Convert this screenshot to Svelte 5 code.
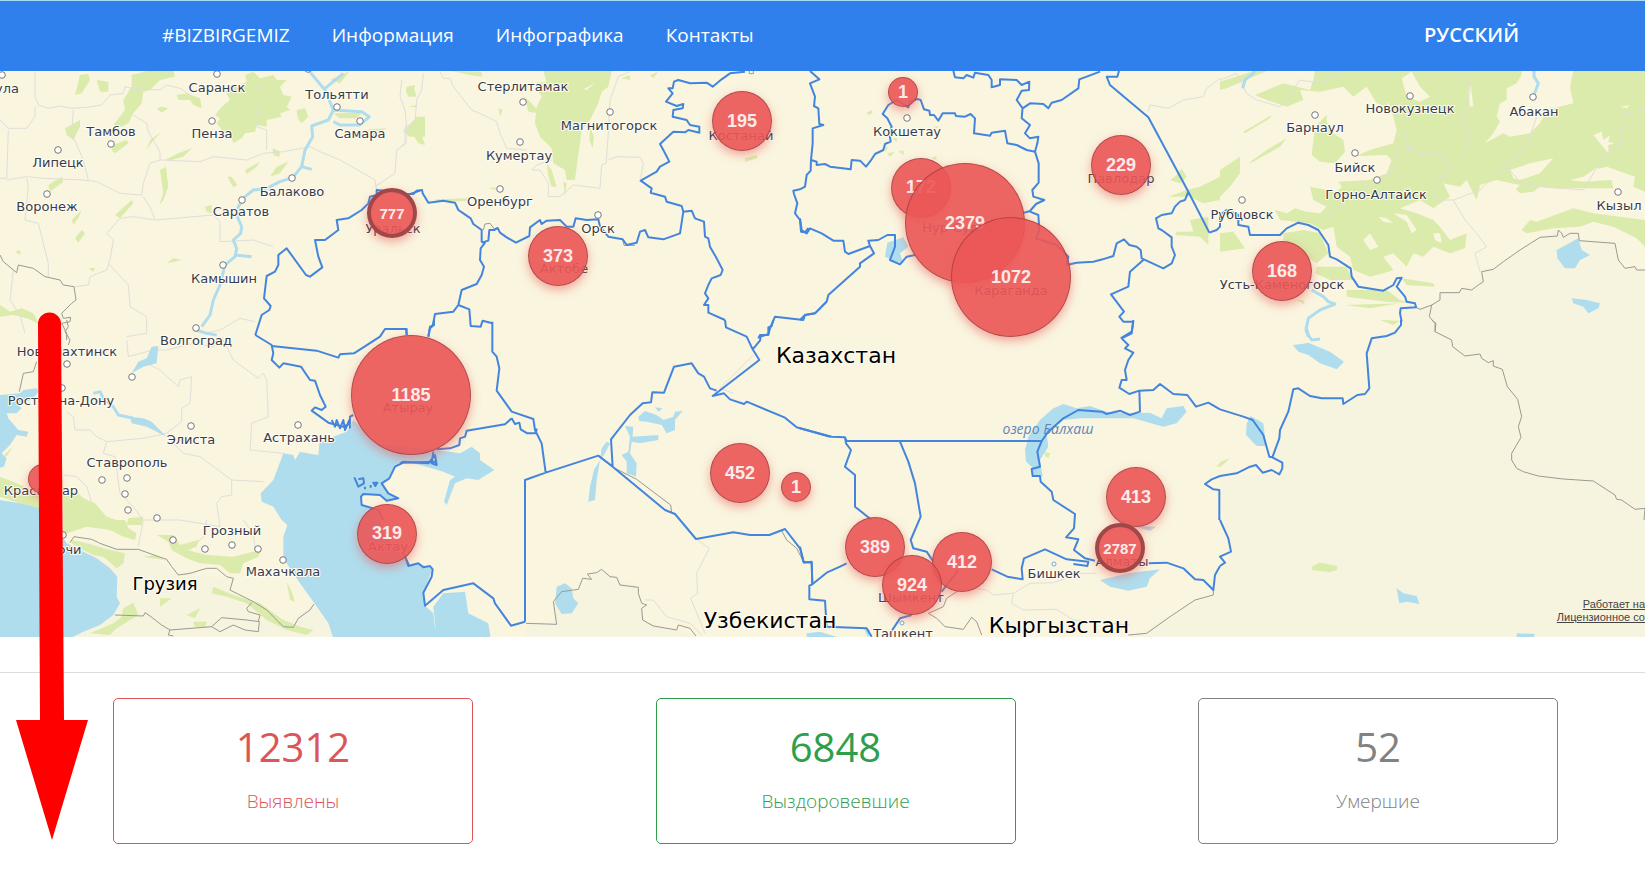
<script lang="ts">
  interface Tile {
    x: number;
    y: number;
    tint?: string;
    forest?: string;
    clearing?: string;
    water?: string;
    river?: string;
    region?: string;
    country?: string;
    outline?: string;
  }

  const MAP_WIDTH = 1645;
  const MAP_HEIGHT = 566;
  const MAP_TOP = 71;

  const links = ['#BIZBIRGEMIZ', 'Информация', 'Инфографика', 'Контакты'];

  const stats = [
    { value: 12312, label: 'Выявлены', kind: 'found' },
    { value: 6848, label: 'Выздоровевшие', kind: 'recovered' },
    { value: 52, label: 'Умершие', kind: 'died' }
  ];

  // Path units inside a tile are thirds of a map unit
  const tiles: Tile[] = [
    {
      x: 0,
      y: 0,
      forest:
        'M395 225 L440 213 L520 213 L525 230 L480 240 L450 270 L430 275 L425 310 L400 340 L385 370 L365 380 L340 375 L375 330 L370 300 L395 260Z M240 225 L265 222 L270 240 L245 280 L225 285Z M290 240 L325 245 L325 275 L300 275Z M530 285 L560 280 L600 295 L605 325 L580 315 L570 300 L535 300Z M470 325 L485 320 L505 325 L485 338Z M675 270 L700 262 L740 245 L735 225 L760 215 L780 235 L820 225 L830 240 L860 240 L840 260 L850 285 L875 290 L860 320 L870 330 L840 340 L845 350 L800 360 L800 380 L770 375 L765 395 L735 400 L725 415 L700 430 L690 400 L670 395 L650 370 L660 355 L645 345 L665 320 L690 300Z M890 330 L915 325 L925 350 L905 370 L893 355Z M1000 340 L1085 338 L1070 355 L1020 355Z M195 385 L240 360 L240 380 L220 420 L200 405Z M340 435 L380 420 L385 430 L345 460 L335 450Z M440 450 L450 420 L485 395 L460 420Z M495 480 L535 460 L575 445 L550 470 L515 480Z M480 510 L498 500 L505 560 L490 600 L478 615 L490 580Z M735 510 L780 485 L770 500 L740 522Z M682 530 L695 530 L712 555 L700 562Z M810 530 L830 500 L865 485 L840 520Z M818 445 L840 455 L838 472 L820 465Z M1080 400 L1110 388 L1160 385 L1120 410 L1090 418Z M1210 395 L1250 350 L1275 350 L1275 410 L1230 410Z M1218 270 L1240 260 L1250 290 L1225 290Z M145 555 L185 530 L190 545 L150 575Z M345 645 L395 600 L400 610 L360 655Z M215 660 L245 630 L235 655 L220 675Z M225 715 L245 690 L255 700 L235 728Z M500 790 L520 775 L545 780 L525 785Z M45 755 L62 750 L60 765Z M265 805 L285 803 L280 815Z M0 915 L30 935 L65 925 L100 940 L115 970 L80 955 L40 945 L0 950Z M615 620 L635 615 L635 640 L620 635Z M990 240 L1050 213 L1020 250Z',
      river:
        'M925 210 L975 270 L1000 330 L985 360 L935 378 L938 410 L915 450 L905 500 L878 533 L840 545 L800 565 L760 570 L735 590 L715 620 L712 650 L725 680 L722 700 L700 720 L710 745 L705 770 L675 795 L660 855 L640 900 L630 945 L605 980 M975 265 L1030 220 M1000 330 L1085 335 L1108 350 L1080 375 L1020 375 L1000 365 M705 765 L755 770 M905 500 L935 508',
      region:
        'M105 215 L105 290 L115 315 L145 325 L180 318 L215 325 L260 322 L305 315 L330 285 L370 280 L375 260 L395 265 L480 270 L500 255 L540 265 L570 285 M105 320 L105 350 L80 385 L25 385 L0 360 M25 390 L20 535 L0 535 M20 540 L80 530 L130 535 L250 540 L290 545 L360 580 L425 585 L430 550 L450 490 L480 480 L480 455 L465 430 L445 395 L440 370 L400 345 M220 330 L215 400 L250 480 L265 540 M80 535 L85 560 L75 660 L115 670 L125 710 L145 790 L145 830 M480 480 L600 485 L640 470 L740 480 L790 460 L850 455 L930 440 L960 455 L1020 480 L1125 540 L1130 570 M1125 560 L1185 520 L1190 450 L1218 430 L1220 380 L1215 330 L1200 290 L1205 240 M430 590 L450 620 L465 660 L400 650 L360 655 L320 700 L340 720 L330 780 L320 810 L270 830 L265 855 L225 860 M465 660 L640 645 L660 665 L660 725 L760 720 L820 740 M325 790 L385 855 L390 920 L440 950 L440 1000 L380 1010 M40 810 L30 900 L60 945 L75 1000 M775 250 L780 300 L770 380 L800 390 L800 450 M610 1000 L660 990 L720 955 L765 965',
      country:
        'M0 765 L10 785 L50 818 L55 795 L100 805 L135 830 L180 840 L190 855 L222 860 L228 900 L215 910 L185 940 L190 955 L212 952 L210 965 L185 970 L200 1000 L200 1020',
      outline:
        'M1260 572 L1222 585 L1180 575 L1130 570 L1130 585 L1110 590 L1105 610 L1085 630 L1045 655 L1010 660 L1015 690 L975 720 L945 720 L955 770 L967 802 L930 830 L918 825 L860 745 L835 765 L835 795 L825 815 L800 828 L792 895 L812 918 L808 930 L785 945 L766 1005'
    },
    {
      x: 400,
      y: 0,
      forest:
        'M430 213 L635 213 L625 260 L605 275 L595 310 L570 360 L545 390 L540 430 L530 500 L525 540 L500 540 L495 510 L460 490 L455 445 L420 410 L405 370 L410 320 L425 290 L400 250 L440 245Z M440 490 L455 510 L470 560 L455 560 L445 530Z M490 545 L500 550 L495 590Z M570 380 L582 410 L578 445 L568 420Z M20 260 L45 255 L40 285 L18 280Z M10 390 L75 365 L60 390 L75 435 L55 430 L40 405Z M105 598 L205 595 L200 603 L110 606Z M375 290 L405 320 L415 340 L385 335Z M295 325 L308 330 L300 350Z M665 235 L690 225 L690 240Z M265 565 L290 562 L285 570Z M1035 475 L1070 465 L1072 475 L1035 485Z M25 320 L50 315 L50 322Z M155 213 L245 215 L245 230 L210 225Z M750 225 L775 215 L760 235Z',
      clearing: 'M550 268 L585 250 L560 270Z',
      region:
        'M120 215 L130 235 L150 235 L160 260 L215 330 L250 345 L290 365 L300 400 L320 445 L380 450 M70 220 L65 270 L50 300 L45 370 L15 380 L15 430 L0 442 M690 215 L655 230 L630 300 L625 400 L618 490 L605 495 L600 565 L520 555 L480 590 L445 590 L445 550 L420 510 L395 510 L410 495 L455 480 M625 480 L650 470 L720 472 L730 490 L722 535',
      country: 'M250 690 L255 672 L270 670 L285 690 M668 718 L672 736 L705 736 M1048 213 L1048 221 L1060 221 L1060 213',
      outline:
        'M0 582 L40 582 L50 572 L66 570 L68 580 L85 608 L130 602 L165 608 L175 630 L190 640 L212 655 L220 672 L245 690 L245 725 L255 728 L242 745 L240 780 L252 800 L245 825 L230 852 L185 870 L175 915 L160 935 L105 942 L98 978 L90 985 L85 1010 M245 728 L265 722 L268 690 L282 690 L293 684 L300 698 L320 712 L348 728 L388 708 L390 682 L420 660 L425 672 L440 662 L480 660 L500 680 L520 680 L527 655 L560 660 L595 658 L600 680 L625 710 L668 718 L680 735 L710 728 L720 695 L735 690 L745 712 L790 718 L840 700 L850 635 L875 632 L885 655 L912 665 L915 710 L925 715 L930 740 L950 775 L968 810 L962 825 L935 835 L925 855 L915 880 L925 895 L912 915 L925 915 L925 938 L975 960 M1035 215 L990 220 L965 238 L938 260 L920 248 L870 250 L835 240 L822 245 L818 265 L805 265 L818 280 L798 305 L830 318 L850 312 L848 325 L820 330 L818 350 L860 360 L870 375 L898 380 L898 398 L865 390 L855 397 L820 395 L780 432 L790 450 L808 485 L780 500 L770 515 L738 533 L722 542 L755 565 L752 578 L795 590 L800 605 L845 618 L850 635 M175 915 L208 928 L212 978 L242 980 L248 962 L277 970 M1200 568 L1180 572 L1182 582 L1192 610 L1185 640 L1200 660 L1203 695 L1215 697 L1225 684 M1075 1015 L1080 1005 L1105 1005 L1110 985 L1125 950 L1210 960 L1215 945 L1245 940 L1280 905'
    },
    {
      x: 800,
      y: 0,
      forest:
        'M1125 530 L1145 505 L1160 530 L1140 550 L1110 540Z M1105 590 L1160 570 L1200 560 L1260 530 L1260 600 L1210 610 L1170 590 L1140 590Z M1170 660 L1225 650 L1225 735 L1200 710 L1125 705 L1130 695 L1180 695Z M200 338 L215 330 L218 340 L203 345Z M295 455 L310 450 L312 465Z M262 460 L285 455 L270 470Z M395 475 L410 468 L408 480Z M275 415 L292 415 L290 425Z M400 380 L415 378 L412 385Z M252 440 L264 440 L258 456Z',
      water: 'M262 728 L310 712 L325 740 L300 760 L310 790 L285 785 L255 770Z',
      region: 'M1045 335 L1050 315 L1105 325 L1150 300 L1210 290 L1220 265 L1260 235',
      outline:
        'M30 213 L58 238 L30 250 L45 290 L42 318 L55 325 L58 372 L70 375 L38 385 L38 430 L33 480 L32 512 L20 525 L15 560 L0 568 M33 480 L50 485 L50 495 L75 492 L90 500 L152 508 L155 480 L180 482 L198 500 L215 478 L225 462 L250 450 L255 432 L272 425 L268 400 L275 380 L262 355 L248 342 L265 315 L290 300 L325 322 L330 305 L352 297 L362 300 L372 328 L388 332 L390 345 L402 345 L415 362 L428 340 L465 340 L468 348 L495 350 L512 342 L525 355 L522 400 L570 407 L575 398 L615 392 L622 430 L650 435 L680 450 L705 455 L712 430 L715 410 L690 415 L675 400 L690 375 L665 355 L668 320 M460 213 L465 232 L490 235 L500 225 L520 233 L525 218 L565 225 L575 240 L575 262 L600 255 L600 238 L650 240 L665 255 L688 245 L687 270 L665 272 L650 300 L668 325 L690 310 L730 312 L745 325 L755 308 L785 300 L835 265 L838 238 L900 215 M957 213 L952 230 L920 230 L930 255 L1045 352 L1165 575 L1228 698 M705 455 L716 490 L716 548 L697 570 L700 590 L733 600 L708 612 L690 633 L672 638 M690 635 L715 645 L718 690 L708 715 L770 735 L805 770 L800 795 L830 788 L880 785 L908 778 L940 768 L950 730 L972 718 L988 735 L1010 740 L1022 750 L1025 775 L1090 805 L1115 790 L1125 765 L1115 740 L1115 712 L1085 690 L1075 685 L1068 655 L1085 645 L1115 640 L1125 620 L1140 605 L1155 600 L1165 575 M1030 780 L990 815 L985 860 L933 883 L972 935 L958 950 L970 965 L1000 965 L995 1000 L965 1015 M0 655 L5 690 L20 700 L30 685 L65 700 L100 722 L130 722 L135 755 L145 762 L210 738 L222 760 L180 790 L180 800 L85 885 L80 905 L45 940 L15 945 L0 960 M210 738 L205 722 L235 720 L262 705 L285 705 L285 740 L270 780 L300 793 L320 770 L345 765'
    },
    {
      x: 1220,
      y: 0,
      tint:
        'M590 925 L635 915 L660 880 L725 872 L790 830 L785 815 L820 800 L880 765 L960 710 L1015 690 L1075 700 L1080 722 L1185 730 L1195 785 L1220 805 L1275 810 L1275 1915 L-275 1915 L-80 1810 L-20 1785 L-15 1740 L35 1655 L0 1500 L0 1430 L180 1420 L187 1390 L155 1370 L205 1240 L225 1165 L370 1205 L430 1185 L450 1165 L440 1050 L455 1015 L500 1000 L545 970 L540 930Z',
      forest:
        'M490 213 L905 213 L905 225 L890 250 L860 265 L860 300 L840 310 L830 350 L840 365 L820 400 L795 430 L850 400 L870 410 L930 400 L960 370 L980 330 L1060 310 L1050 260 L1060 213 L1275 213 L1275 575 L1240 560 L1245 530 L1160 500 L1120 510 L1090 530 L1050 540 L1090 545 L1175 540 L1180 565 L1000 565 L960 560 L940 575 L900 580 L870 550 L830 540 L780 555 L770 600 L740 540 L720 560 L670 550 L690 590 L640 625 L600 600 L540 625 L590 640 L640 660 L660 680 L690 720 L740 700 L735 745 L690 760 L640 740 L610 770 L580 760 L560 800 L520 760 L490 770 L520 810 L490 820 L450 830 L400 810 L390 770 L350 740 L340 680 L310 690 L270 670 L180 660 L165 630 L200 640 L225 625 L260 635 L300 640 L320 620 L280 600 L270 560 L350 575 L365 560 L355 545 L450 540 L500 520 L515 480 L500 465 L410 468 L450 450 L520 430 L530 390 L520 350 L500 290 L440 240Z M285 213 L500 213 L520 260 L500 320 L470 310 L440 260 L400 290 L370 260 L300 275 L240 270 L250 300 L200 320 L140 300 L105 285 L190 250 L270 270 L280 240Z M285 380 L320 345 L320 365 L340 400 L370 420 L375 455 L345 490 L300 485 L275 465Z M0 245 L100 213 L140 213 L20 265 L0 270Z M70 395 L155 345 L150 355 L75 400Z M85 490 L140 450 L200 415 L180 440 L100 485Z M0 510 L60 470 L60 520 L30 560 L0 590Z M0 700 L40 695 L75 745 L0 755Z M380 870 L500 870 L540 900 L580 910 L500 905 L380 890Z M375 915 L540 910 L450 925Z M545 835 L640 850 L645 860 L560 855Z M480 960 L540 962 L520 975Z M190 700 L250 690 L300 700 L325 760 L290 790 L260 770 L190 720Z M290 800 L380 800 L400 840 L330 840 L285 820Z M905 690 L930 660 L950 665 L1060 625 L1120 640 L1200 650 L1275 660 L1275 740 L1250 715 L1180 680 L1120 665 L1080 680 L1000 685 L920 700Z M232 900 L250 900 L255 915Z',
      clearing:
        'M545 235 L575 215 L600 260 L630 290 L600 305 L560 290Z M1120 405 L1145 395 L1150 420 L1170 405 L1165 425 L1185 430 L1165 435 L1165 460 L1140 430Z M870 510 L930 490 L1000 475 L960 520 L900 540 L880 535Z M745 275 L752 255 L760 318 L750 320Z M1105 530 L1130 500 L1145 520 L1120 545Z M1200 320 L1230 315 L1220 325Z M520 640 L560 645 L590 690 L575 700 L560 665Z M430 720 L450 700 L475 740 L450 750Z M640 700 L660 700 L665 730 L645 720Z M475 650 L500 655 L520 670 L490 665Z M820 555 L850 545 L900 555 L880 575 L820 570Z',
      water:
        'M1010 750 L1075 715 L1085 750 L1110 765 L1080 780 L1065 805 L1035 805 L1012 775Z M1055 895 L1100 900 L1140 910 L1135 925 L1105 940 L1090 920 L1060 910Z',
      river:
        'M105 215 L75 240 L68 265 M942 213 L942 230 L955 250 L942 285 M275 870 L310 890 L325 905 L345 912 L300 930 L265 955 L258 990 L265 1010',
      region:
        'M570 440 L600 465 L640 455 L680 475 L685 510 L640 560 L650 600 L700 600 L735 660 L770 700 L800 740 L765 760 L780 815 M740 220 L750 270 L740 320 L720 350 L750 410 L735 460 L690 505 M310 655 L370 610 L480 530 L520 520 L535 450 L570 445 L550 390 L550 340 M700 600 L780 570 L830 520 L860 500 L920 440 L950 350 M860 500 L900 545 L960 560 L1090 570 L1150 470 L1200 430 L1215 340 L1275 330 M0 240 L50 220 L80 280 L110 300 L180 320 L240 240 L300 250 L370 220',
      country:
        'M588 922 L600 928 L635 915 L660 900 L660 878 L718 878 L725 865 L755 870 L775 855 L790 845 L785 815 L820 808 L850 785 L900 750 L960 712 L1012 708 L1015 690 L1025 700 L1030 712 L1050 700 L1075 700 L1078 722 L1185 730 L1195 780 L1215 805 L1245 800 L1250 810 L1275 810 M635 915 L628 950 L645 970 L645 995',
      outline:
        'M-32 698 L-10 690 L0 680 L0 645 L20 630 L55 645 L55 675 L85 680 L90 705 L180 705 L200 685 L235 668 L265 675 L295 690 L325 735 L330 770 L350 778 L392 805 L395 830 L415 860 L490 872 L520 855 L530 835 L545 833 L530 860 L555 890 L560 905 L585 910 L588 922 L542 925 L540 940 L545 965'
    },
    {
      x: 0,
      y: 320,
      tint:
        'M215 660 L415 688 L535 765 L690 775 L690 810 L850 920 L942 852 L1000 955 L215 955 L350 870 L350 770Z',
      forest:
        'M190 515 L230 515 L250 535 L285 550 L320 590 L350 600 L375 600 L385 625 L410 640 L405 660 L370 650 L330 630 L260 620 L200 640 L190 640Z M0 470 L50 490 L115 520 L118 570 L60 550 L0 530Z M385 595 L430 590 L425 615 L380 615Z M215 660 L260 670 L330 690 L375 700 L370 730 L350 745 L310 710 L280 705 L250 690 L215 670Z M470 645 L520 645 L540 675 L595 660 L590 680 L560 690 L620 705 L700 710 L760 695 L785 690 L775 710 L730 730 L720 760 L690 760 L660 735 L600 730 L560 715 L515 690 L505 665Z M430 710 L465 705 L510 730 L490 720Z M640 800 L700 825 L780 850 L850 900 L900 920 L940 930 L920 945 L860 930 L800 900 L740 850 L680 830 L635 820Z M270 940 L340 910 L365 890 L370 865 L400 848 L415 885 L350 925 L330 945Z M860 785 L875 815 L885 845 L870 840Z M480 835 L515 835 L480 860Z M560 885 L600 865 L585 895Z M580 905 L620 905 L615 920 L585 920Z M12 405 L38 380 L20 410Z',
      water:
        'M0 225 L60 220 L70 210 L110 205 L115 215 L95 240 L50 250 L65 265 L50 280 L20 280 L25 295 L55 330 L85 335 L80 350 L50 345 L30 375 L5 400 L20 415 L12 440 L0 443Z M0 540 L60 550 L118 565 L150 600 L200 670 L250 695 L290 715 L330 745 L352 770 L350 830 L360 850 L340 885 L300 915 L250 935 L210 955 L0 955Z M850 400 L880 405 L885 420 L900 395 L935 402 L955 405 L958 370 L1000 350 L1040 335 L1060 300 L1130 370 L1310 390 L1310 425 L1210 428 L1185 440 L1168 475 L1145 490 L1165 520 L1195 535 L1160 542 L1140 525 L1090 522 L1083 530 L1085 555 L1135 570 L1150 640 L1228 738 L1250 730 L1298 745 L1270 818 L1275 857 L1300 880 L1305 920 L1315 955 L1000 955 L985 910 L940 845 L900 790 L850 715 L850 650 L862 615 L845 600 L820 560 L785 545 L782 520 L820 480Z M455 80 L475 78 L470 130 L430 140 L395 160 L415 125 L440 115Z M390 290 L430 295 L455 305 L500 350 L440 320 L395 310Z',
      river: 'M280 220 L300 215 L310 235 L340 260 L355 285 L400 295 M588 30 L620 40 L650 45',
      region:
        'M200 275 L220 290 L225 330 L270 330 L290 350 L320 365 L430 355 L500 340 L545 305 L545 265 L570 250 L575 170 L540 180 L535 200 L480 150 L440 130 M320 365 L310 400 L345 410 L360 520 L400 560 L430 600 L540 600 L660 620 L650 550 L665 530 L695 525 L695 480 L600 410 L550 400 L500 350 M695 480 L790 485 M670 60 L700 120 L775 175 L790 160 L800 180 L805 290 L755 310 L750 390 L850 400 M190 465 L230 470 L260 500 L275 545 M430 600 L415 680 M620 600 L610 650 L560 700 M730 600 L760 640 L765 690 M380 60 L385 110 L460 90 L500 90 L580 70 L640 80 L670 50',
      country:
        'M200 0 L205 20 L195 35 L210 60 L205 75 M110 125 L100 155 L70 160 L58 215 M210 668 L222 650 L275 658 L300 670 L350 688 L415 688 L470 708 L500 718 L515 740 L535 765 L570 760 L620 745 L650 745 L680 770 L700 775 L690 810 L740 835 L760 845 L800 870 L835 905 L850 920 L880 922 L895 895 L930 870 L942 852 M345 885 L430 888 L435 878 L450 888 L485 915 L510 930 L635 920 L665 893 L740 900 L778 905 L775 935 L735 930 L700 915 L660 935 L635 920 M510 930 L505 945 L520 948 M755 848 L740 865 L745 875 L780 885 L775 905',
      outline:
        'M766 45 L815 75 L820 100 L815 120 L838 143 L850 130 L903 140 L930 180 L945 182 L960 225 L977 260 L965 270 L945 262 L935 272 L985 308 L1030 320 L1050 310 L1050 290 L1060 285 M815 78 L950 92 L1015 113 L1020 103 L1062 100 L1140 50 L1155 27 L1220 27 L1220 45 M995 300 L1005 320 L1010 300 L1020 325 L1030 300 L1035 330 L1048 300 L1050 325 M1310 425 L1210 428 L1185 440 L1168 475 L1145 490 L1165 520 L1195 535 L1160 542 L1140 525 L1090 522 L1083 530 L1085 555 L1135 570 L1150 600 M1063 472 L1075 500 L1092 490 L1090 475 L1075 478 M1095 500 L1095 508 M1112 495 L1112 503 M1120 488 L1132 488 L1126 498Z M1210 700 L1228 738'
    },
    {
      x: 400,
      y: 320,
      tint: 'M378 910 L460 905 L460 845 L535 808 L605 748 L715 802 L728 900 L888 948 L888 955 L378 955Z',
      water:
        'M110 390 L180 400 L215 380 L240 400 L240 420 L283 450 L235 480 L200 475 L165 490 L140 555 L132 545 L150 480 L165 470 L130 455 L80 440 L40 430 L0 428 L0 380Z M100 860 L130 820 L195 815 L205 880 L265 910 L272 955 L110 955Z M715 290 L735 273 L770 285 L790 300 L820 290 L825 275 L848 273 L825 300 L825 330 L800 340 L785 315 L740 305 L718 303Z M765 262 L788 265 L775 275Z M675 318 L700 320 L698 350 L775 345 L775 360 L720 370 L695 365 L690 400 L710 430 L708 470 L680 460 L680 425 L665 405 L685 395 L690 350Z M605 385 L620 365 L630 370 L615 400 L600 420 L590 480 L585 540 L565 545 L570 500 L582 450 L600 420Z M465 850 L470 800 L495 790 L515 805 L520 835 L535 850 L515 880 L485 882Z',
      region:
        'M888 657 L928 685 L890 760 L893 820 L872 835 L895 890 L915 940 M735 840 L760 840 L800 890 L870 910 L905 945 M1060 105 L960 205 L1000 220',
      country:
        'M378 910 L470 913 L460 845 L485 815 L535 808 L548 775 L575 778 L562 762 L590 758 L605 748 L630 770 L650 772 L660 795 L715 802 L715 820 L725 850 L740 855 L725 865 L728 900 L760 918 L830 930 L835 915 L870 925 L888 948 M645 445 L710 478 L812 555 L815 578 M1145 632 L1160 660 L1190 685 L1212 728',
      outline:
        'M85 50 L90 20 L102 15 L102 0 M0 27 L18 27 L20 45 M277 5 L277 95 L290 110 L298 145 L290 212 L335 275 L400 297 L405 330 L425 370 L437 458 M335 295 L315 313 L200 332 L195 350 L180 355 L178 375 L150 385 L110 388 M335 295 L345 312 L358 308 L362 328 L382 340 L408 340 L410 325 M100 395 L95 430 L110 435 L105 405 L85 430 L10 425 L0 430 M375 905 L375 480 L437 458 L595 407 L638 440 L795 570 L825 582 L888 657 L1000 637 L1050 645 L1108 645 L1155 627 L1200 685 L1212 728 L1235 725 L1237 793 M638 440 L633 358 L690 285 L728 250 L753 247 L757 217 L792 218 L822 140 L875 130 L895 160 L912 170 L930 205 L950 212 M975 0 L978 22 L1040 50 L1058 88 L1078 120 L938 228 L972 220 L990 238 L1032 252 L1040 245 L1155 293 L1190 322 L1290 350 M1058 88 L1080 62 L1082 50 L1105 42 L1105 22 L1115 18 L1120 0 M15 710 L25 738 L55 730 L70 742 L90 738 L98 748 L95 770 L70 818 L75 857 L130 810 L220 790 L280 835 L285 850 L333 917 L375 905'
    },
    {
      x: 800,
      y: 320,
      forest: 'M735 395 L750 400 L745 415 L735 408Z M1250 440 L1262 425 L1290 415 L1262 440Z',
      water:
        'M675 390 L685 350 L720 300 L760 265 L790 252 L830 265 L870 258 L920 275 L990 280 L1050 278 L1085 295 L1100 265 L1150 258 L1160 275 L1130 310 L1090 320 L1000 295 L920 295 L840 295 L790 300 L740 345 L745 380 L720 420 L728 470 L700 465 L695 440 L678 425Z M900 780 L985 760 L1080 748 L1050 775 L1040 800 L985 812 L930 800Z M1000 618 L1068 620 L1050 632Z M20 940 L60 935 L125 955 L20 955Z M190 920 L210 930 L205 955Z',
      region:
        'M490 800 L560 810 L580 825 L640 820 L690 790 L760 788 L840 760 L890 760 M640 820 L635 850 L670 870 L770 868 L820 900 L990 915',
      country:
        'M475 812 L440 835 L430 860 L385 880 L410 895 L435 920 L490 928 L515 892 L530 905 L545 945 M985 945 L1040 940 L1110 890 L1185 840 L1240 825 L1240 805',
      outline:
        'M0 325 L95 350 L135 352 L140 363 L725 363 L745 335 L790 295 L835 270 L905 275 L920 282 L960 272 L990 285 L1020 275 L1018 210 M135 352 L138 370 L153 390 L135 440 L165 465 L165 560 L215 600 M300 365 L325 425 L345 490 L362 590 L332 660 L340 685 L380 695 L400 725 M725 363 L712 395 L720 440 L695 447 L698 468 L720 468 L722 485 L755 515 L760 540 L825 582 L822 625 L798 652 L835 658 L822 690 L855 715 L885 722 M965 55 L985 75 L975 85 L1000 98 L985 120 L975 150 L980 180 L965 180 L958 203 L988 222 L1018 212 L1060 210 L1080 192 L1120 222 L1162 225 L1188 260 L1225 248 L1260 268 M575 748 L622 770 L668 778 L665 745 L672 715 L735 688 L800 718 L865 725 L862 738 L820 732 M1045 730 L1100 728 L1150 745 L1185 778 L1210 780 L1240 810 L1245 765 L1260 738 M35 725 L37 793 L28 797 L28 838 L75 842 L80 920 L200 925 L215 950 M37 793 L80 758 L120 740 L140 730 M265 948 L300 895 L335 885 M425 815 L475 750 M1260 468 L1235 478 L1215 492 L1240 508 L1258 510 L1258 600 M0 680 L10 725 L37 728 M1000 0 L995 35 L962 55'
    },
    {
      x: 1220,
      y: 320,
      forest: 'M275 740 L300 728 L352 738 L350 750 L330 757 L275 750Z',
      water:
        'M80 310 L92 288 L130 310 L138 378 L110 378 L78 345Z M530 805 L550 820 L590 828 L598 852 L560 845 L538 850Z M890 940 L945 942 L940 955 L890 955Z M218 75 L245 72 L265 68 L330 95 L372 125 L350 148 L300 130 L265 105 L235 95Z',
      river: 'M258 20 L265 45 L275 60 L300 57',
      country:
        'M645 35 L695 60 L698 80 L735 108 L780 102 L785 115 L805 128 L820 122 L820 138 L847 148 L862 200 L893 238 L905 290 L895 320 L903 352 L875 400 L875 420 L890 445 L910 455 L955 468 L1030 477 L1120 483 L1185 525 L1190 538 L1205 540 L1245 568 L1275 565 L1272 600 M645 35 L648 10 L635 0',
      outline:
        'M543 0 L543 15 L525 38 L500 48 L455 55 L440 100 L448 205 L435 222 L412 225 L370 252 L368 235 L305 235 L270 228 L235 205 L220 208 L205 275 L180 330 L178 355 L157 412 L187 428 L187 445 L178 463 L155 450 L128 458 L108 435 L90 440 L50 460 L0 468 M0 268 L70 290 L98 300 L130 345 L148 410 L157 412 M0 600 L25 655 L33 695 L0 710 L15 728 L0 738'
    }
  ];

  const layers = ['tint', 'forest', 'clearing', 'region', 'water', 'river', 'country', 'outline'] as const;

  const towns: [string, number, number][] = [
    ['Тула', 3, 93], ['Саранск', 217, 92], ['Тольятти', 337, 99], ['Самара', 360, 138],
    ['Пенза', 212, 138], ['Тамбов', 111, 136], ['Липецк', 58, 167], ['Воронеж', 47, 211],
    ['Балаково', 292, 196], ['Саратов', 241, 216], ['Камышин', 224, 283], ['Уральск', 393, 233],
    ['Волгоград', 196, 345], ['Новошахтинск', 67, 356], ['Ростов-на-Дону', 61, 405],
    ['Элиста', 191, 444], ['Астрахань', 299, 442], ['Ставрополь', 127, 467],
    ['Краснодар', 41, 495], ['Сочи', 65, 554], ['Грозный', 232, 535], ['Махачкала', 283, 576],
    ['Стерлитамак', 523, 91], ['Магнитогорск', 609, 130], ['Кумертау', 519, 160],
    ['Оренбург', 500, 206], ['Орск', 598, 233], ['Костанай', 741, 140], ['Актобе', 564, 273],
    ['Кокшетау', 907, 136], ['Нур-Султан', 962, 232], ['Караганда', 1011, 295],
    ['Павлодар', 1121, 183], ['Новокузнецк', 1410, 113], ['Барнаул', 1315, 132],
    ['Абакан', 1534, 116], ['Бийск', 1355, 172], ['Горно-Алтайск', 1376, 199],
    ['Рубцовск', 1242, 219], ['Кызыл', 1619, 210], ['Усть-Каменогорск', 1282, 289],
    ['Бишкек', 1054, 578], ['Алматы', 1122, 566], ['Шымкент', 911, 602],
    ['Ташкент', 903, 638], ['Атырау', 408, 412], ['Актау', 388, 551]
  ];

  const countries: [string, number, number][] = [
    ['Казахстан', 836, 363], ['Узбекистан', 770, 628], ['Кыргызстан', 1059, 633]
  ];

  const dots = [
    [2, 75], [217, 74], [337, 107], [360, 121], [212, 121], [111, 144], [58, 150], [47, 194],
    [292, 178], [242, 200], [223, 265], [196, 328], [308, 69], [67, 364], [132, 377], [62, 388],
    [191, 426], [298, 425], [102, 480], [127, 478], [125, 494], [128, 510], [157, 518], [63, 535],
    [173, 540], [205, 549], [232, 545], [258, 549], [283, 560], [523, 102], [610, 112], [520, 142],
    [500, 189], [598, 215], [907, 118], [1410, 96], [1315, 115], [1533, 97], [1355, 153],
    [1377, 180], [1242, 200], [1618, 192]
  ];

  const markers = [
    { count: 195, x: 742, y: 121, size: 'medium' },
    { count: 1, x: 903, y: 92, size: 'small' },
    { count: 172, x: 921, y: 188, size: 'medium' },
    { count: 2379, x: 965, y: 223, size: 'large' },
    { count: 1072, x: 1011, y: 277, size: 'large' },
    { count: 229, x: 1121, y: 165, size: 'medium' },
    { count: 777, x: 392, y: 213, size: 'ring' },
    { count: 373, x: 558, y: 256, size: 'medium' },
    { count: 168, x: 1282, y: 271, size: 'medium' },
    { count: 1185, x: 411, y: 395, size: 'large' },
    { count: 452, x: 740, y: 473, size: 'medium' },
    { count: 1, x: 796, y: 487, size: 'small' },
    { count: 319, x: 387, y: 534, size: 'medium' },
    { count: 389, x: 875, y: 547, size: 'medium' },
    { count: 412, x: 962, y: 562, size: 'medium' },
    { count: 924, x: 912, y: 585, size: 'medium' },
    { count: 413, x: 1136, y: 497, size: 'medium' },
    { count: 2787, x: 1120, y: 548, size: 'ring' },
    { count: 1, x: 43, y: 479, size: 'small' }
  ];

  function place(x: number, y: number): string {
    return `left: ${(x / MAP_WIDTH) * 100}%; top: ${((y - MAP_TOP) / MAP_HEIGHT) * 100}%`;
  }
</script>

<header>
  <nav>
    {#each links as link}
      <a href="/">{link}</a>
    {/each}
  </nav>
  <button class="language">РУССКИЙ</button>
</header>

<main>
  <section class="map">
    <svg viewBox="0 {MAP_TOP} {MAP_WIDTH} {MAP_HEIGHT}" role="img" aria-label="Казахстан">
      {#each layers as layer}
        <g class={layer}>
          {#each tiles as tile}
            {#if tile[layer]}
              <path transform="translate({tile.x} {tile.y}) scale({1 / 3})" d={tile[layer]} />
            {/if}
          {/each}
        </g>
      {/each}

      {#each dots as [x, y]}
        <circle class="dot" cx={x} cy={y} r="3.3" />
      {/each}
      <circle class="dot capital" cx="1054" cy="564" r="2" />
      <circle class="dot capital" cx="902" cy="623" r="2" />

      {#each towns as [name, x, y]}
        <text class="town" {x} {y}>{name}</text>
      {/each}
      <text class="lake" x="1048" y="434">озеро Балхаш</text>
      {#each countries as [name, x, y]}
        <text class="land" {x} {y}>{name}</text>
      {/each}
      <text class="land minor" x="165" y="590">Грузия</text>
    </svg>

    {#each markers as marker}
      <button class="marker {marker.size}" style={place(marker.x, marker.y)}>{marker.count}</button>
    {/each}

    <div class="copyright">
      <a href="/">Работает на</a>
      <a href="/">Лицензионное со</a>
    </div>
  </section>

  <hr />

  <section class="stats">
    {#each stats as stat}
      <div class="card {stat.kind}">
        <div class="value">{stat.value}</div>
        <div class="label">{stat.label}</div>
      </div>
    {/each}
  </section>

  <!-- Scroll hint -->
  <svg class="arrow" width="72" height="530" viewBox="0 0 72 530" aria-hidden="true">
    <path d="M22 12 A11.5 11.5 0 0 1 45 12 L48 408 H72 L36 528 L0 408 H24Z" />
  </svg>
</main>

<style>
  :global(body) {
    margin: 0;
    background: #fff;
    font-family: 'Open Sans', 'Noto Sans', sans-serif;
  }

  header {
    display: flex;
    align-items: center;
    justify-content: space-between;
    box-sizing: border-box;
    height: 71px;
    padding: 0 126px 2px 162px;
    border-top: 1px solid #a9dcf5;
    background: #2f80ed;
  }

  nav {
    display: flex;
    gap: 42px;
  }

  nav a,
  .language {
    color: #fff;
    font-size: 19px;
    line-height: 28px;
    text-decoration: none;
  }

  .language {
    padding: 0;
    border: none;
    background: none;
    font-family: inherit;
    font-size: 20px;
    font-weight: 600;
    cursor: pointer;
  }

  main {
    position: relative;
  }

  .map {
    position: relative;
    overflow: hidden;
    background: #faf5df;
  }

  .map svg {
    display: block;
    width: 100%;
    height: auto;
  }

  .map path {
    vector-effect: non-scaling-stroke;
    stroke-linejoin: round;
  }

  .tint { fill: #f6f3de; }
  .forest { fill: #dbebac; }
  .clearing { fill: #faf5df; }
  .water { fill: #b0dded; }

  .region,
  .river,
  .country,
  .outline {
    fill: none;
  }

  .region { stroke: #e0deda; }
  .river { stroke: #b0dded; stroke-width: 3px; }
  .country { stroke: #9a9a92; }
  .outline { stroke: #4385dd; stroke-width: 2px; }

  .dot {
    fill: #fff;
    stroke: #777;
  }

  .capital {
    stroke: #6aaed8;
  }

  .map text {
    font-family: 'DejaVu Sans', sans-serif;
    text-anchor: middle;
    paint-order: stroke;
    stroke: #fffdf5;
    stroke-width: 2px;
    stroke-linejoin: round;
  }

  .map .town {
    font-size: 13px;
    fill: #383c48;
  }

  .map .land {
    font-size: 22px;
    fill: #000;
  }

  .map .minor {
    font-size: 18px;
  }

  .map .lake {
    font-family: 'Open Sans', sans-serif;
    font-size: 14px;
    font-style: italic;
    fill: #5c86bd;
    stroke: none;
  }

  .marker {
    position: absolute;
    box-sizing: border-box;
    width: 60px;
    height: 60px;
    padding: 0;
    border: 1px solid rgba(120, 50, 50, 0.5);
    border-radius: 50%;
    background: rgba(235, 87, 87, 0.91);
    box-shadow: 0 4px 10px rgba(235, 87, 87, 0.5);
    color: #fbeaea;
    font-family: 'Liberation Sans', Arial, sans-serif;
    font-size: 18px;
    font-weight: 700;
    transform: translate(-50%, -50%);
    cursor: pointer;
  }

  .marker.small {
    width: 30px;
    height: 30px;
  }

  .marker.large {
    width: 120px;
    height: 120px;
  }

  .marker.ring {
    width: 50px;
    height: 50px;
    border: 4px solid #a04848;
    font-size: 15px;
  }

  .copyright {
    position: absolute;
    right: 0;
    bottom: 13px;
    display: flex;
    flex-direction: column;
    align-items: flex-end;
  }

  .copyright a {
    color: #444;
    font-family: 'Liberation Sans', Arial, sans-serif;
    font-size: 11px;
    line-height: 13px;
    white-space: nowrap;
  }

  hr {
    margin: 35px 0 25px;
    border: none;
    border-top: 1px solid #dcdcdc;
  }

  .stats {
    display: flex;
    justify-content: space-between;
    padding: 0 87px 0 113px;
  }

  .card {
    box-sizing: border-box;
    width: 360px;
    padding: 24px 20px 28px;
    border: 1px solid;
    border-radius: 5px;
    text-align: center;
  }

  .value {
    font-size: 40px;
    line-height: 48px;
  }

  .label {
    margin-top: 16px;
    font-size: 19px;
    font-weight: 300;
    line-height: 28px;
  }

  .found { color: #dc5658; }
  .recovered { color: #2f9e4b; }
  .died { color: #828282; }

  .arrow {
    position: absolute;
    top: 241px;
    left: 16px;
    pointer-events: none;
  }

  .arrow path {
    fill: #f00;
  }
</style>
